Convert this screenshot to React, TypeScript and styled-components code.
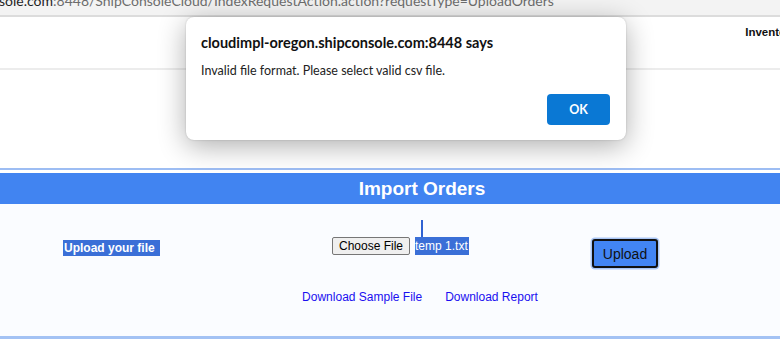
import React from "react";
import styled, { createGlobalStyle } from "styled-components";

const GlobalStyle = createGlobalStyle`
  html, body {
    margin: 0;
    padding: 0;
    background: #fff;
    overflow: hidden;
  }
  body {
    font-family: "Liberation Sans", Arial, sans-serif;
  }
`;

const Page = styled.div`
  position: relative;
  width: 780px;
  height: 340px;
  overflow: hidden;
  background: #fff;
`;

const AddressBar = styled.div`
  height: 15px;
  background: #f3f3f3;
  border-bottom: 2px solid #dcdcdc;
  overflow: hidden;
  font-family: "Lato", "Open Sans", sans-serif;
  font-size: 14px;
  white-space: nowrap;
  color: #6d6d6d;

  span {
    display: block;
    margin-top: -8px;
    margin-left: -1px;
  }

  b {
    font-weight: normal;
    color: #1f1f1f;
  }
`;

const TopNav = styled.div`
  height: 53px;
  border-bottom: 2px solid #ececec;
  display: flex;
  justify-content: flex-end;
  align-items: flex-start;
  overflow: hidden;
  padding-top: 9px;
  box-sizing: border-box;

  span {
    font-size: 11.5px;
    font-weight: bold;
    color: #111;
    margin-right: -17px;
    white-space: nowrap;
  }
`;

const Blank = styled.div`
  height: 98px;
`;

const HeaderRule = styled.div`
  height: 2px;
  background: #9dbdf3;
  margin-bottom: 3px;
`;

const Heading = styled.div`
  height: 31px;
  background: #4184f1;
  color: #fff;
  font-size: 19px;
  font-weight: bold;
  display: flex;
  align-items: center;
  justify-content: center;
  padding-left: 64px;
`;

const Content = styled.div`
  height: 135px;
  background: #fafcff;
  border-bottom: 3px solid #a3c2f4;
  box-sizing: border-box;
  padding-top: 33px;
`;

const Row = styled.div`
  display: grid;
  grid-template-columns: 332px 260px 1fr;
  align-items: start;
`;

const Label = styled.div`
  padding-left: 63px;
  padding-top: 1px;

  span {
    display: inline-block;
    background: #3a6fd7;
    color: #fff;
    font-size: 12px;
    font-weight: bold;
    line-height: 16px;
    padding: 0 5px 0 1px;
  }
`;

const FileField = styled.div`
  display: flex;
  align-items: center;
  gap: 5px;
`;

const ChooseButton = styled.button`
  font-family: "Liberation Sans", Arial, sans-serif;
  font-size: 12px;
  height: 18px;
  padding: 0 6px;
  background: #efefef;
  border: 1px solid #767676;
  border-radius: 2px;
  color: #000;
`;

const FileName = styled.span`
  position: relative;
  background: #3a6fd7;
  color: #fff;
  font-size: 12px;
  line-height: 18px;
  padding-right: 1px;
`;

const Caret = styled.i`
  position: absolute;
  left: 6px;
  top: -17px;
  width: 2px;
  height: 17px;
  background: #2f62d2;
`;

const UploadButton = styled.button`
  margin-top: 2px;
  font-family: "Liberation Sans", Arial, sans-serif;
  font-size: 14px;
  width: 66px;
  height: 29px;
  background: #4285f4;
  color: #111;
  border: 2px solid #111;
  border-radius: 3px;
  box-shadow: 0 0 0 1.5px #a9c6f6;
`;

const Links = styled.div`
  display: flex;
  justify-content: center;
  gap: 23px;
  padding-left: 60px;
  margin-top: 22px;

  a {
    color: #1a0ff0;
    font-size: 12px;
    text-decoration: none;
  }
`;

const Dialog = styled.div`
  position: absolute;
  left: 186px;
  top: 17px;
  width: 440px;
  height: 123px;
  box-sizing: border-box;
  background: #fff;
  border-radius: 8px;
  box-shadow: 0 6px 28px rgba(0, 0, 0, 0.32), 0 0 2px rgba(0, 0, 0, 0.2);
  font-family: "Lato", "Open Sans", sans-serif;
  padding: 17px 16px 0 15px;
  display: flex;
  flex-direction: column;
`;

const DialogTitle = styled.div`
  font-size: 14.5px;
  font-weight: bold;
  color: #111;
`;

const DialogText = styled.div`
  margin-top: 12px;
  font-size: 12.5px;
  color: #222;
`;

const DialogActions = styled.div`
  display: flex;
  justify-content: flex-end;
  margin-top: 16px;
`;

const OkButton = styled.button`
  width: 63px;
  height: 31px;
  background: #0a78d4;
  color: #fff;
  border: none;
  border-radius: 4px;
  font-family: "Lato", "Open Sans", sans-serif;
  font-size: 12.5px;
  font-weight: bold;
`;

const App: React.FC = () => {
  return (
    <Page>
      <GlobalStyle />
      <AddressBar>
        <span>
          <b>sole.com</b>:8448/ShipConsoleCloud/IndexRequestAction.action?requestType=UploadOrders
        </span>
      </AddressBar>
      <TopNav>
        <span>Inventory</span>
      </TopNav>
      <Blank />
      <HeaderRule />
      <Heading>Import Orders</Heading>
      <Content>
        <Row>
          <Label>
            <span>Upload your file</span>
          </Label>
          <FileField>
            <ChooseButton>Choose File</ChooseButton>
            <FileName>
              <Caret />
              temp 1.txt
            </FileName>
          </FileField>
          <div>
            <UploadButton>Upload</UploadButton>
          </div>
        </Row>
        <Links>
          <a href="#">Download Sample File</a>
          <a href="#">Download Report</a>
        </Links>
      </Content>
      <Dialog>
        <DialogTitle>cloudimpl-oregon.shipconsole.com:8448 says</DialogTitle>
        <DialogText>Invalid file format. Please select valid csv file.</DialogText>
        <DialogActions>
          <OkButton>OK</OkButton>
        </DialogActions>
      </Dialog>
    </Page>
  );
};

export default App;
